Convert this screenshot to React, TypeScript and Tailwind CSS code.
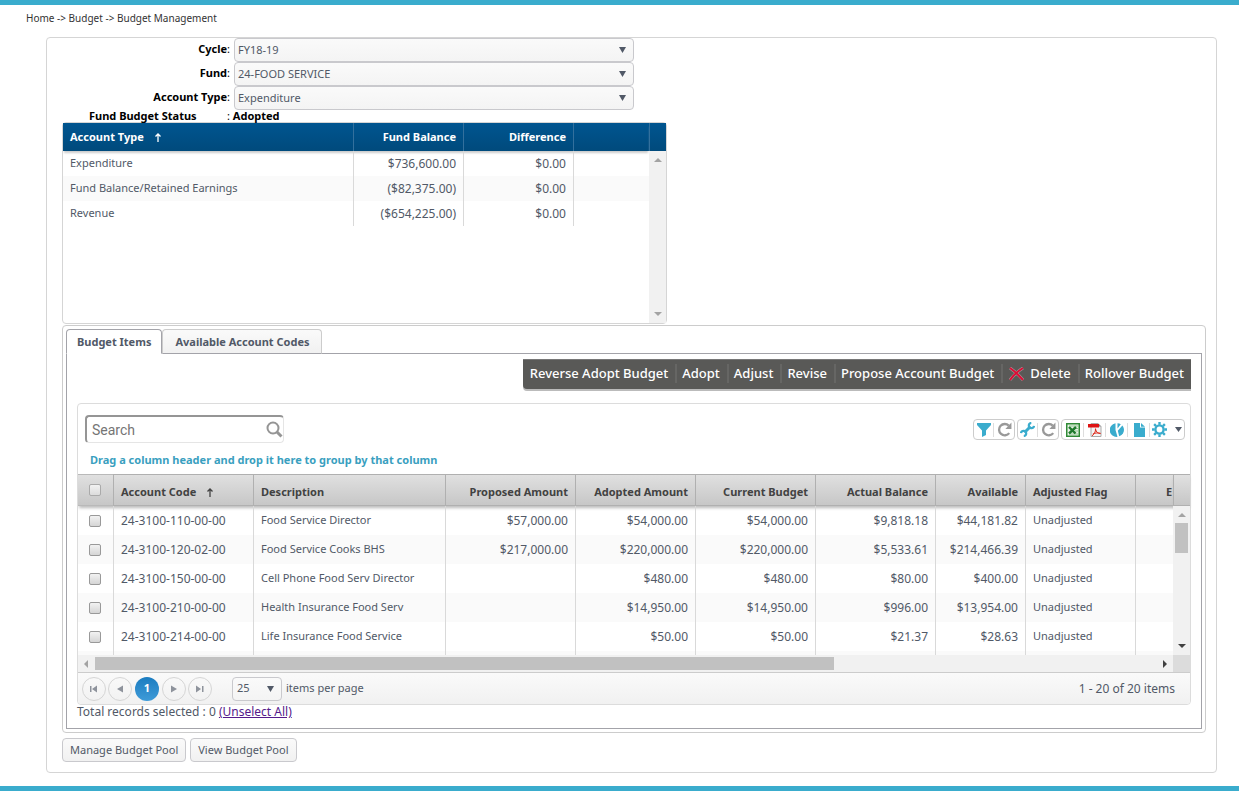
import clsx from "clsx";
import { useState, type ReactNode } from "react";

const accounts = [
  { type: "Expenditure", balance: "$736,600.00", difference: "$0.00" },
  { type: "Fund Balance/Retained Earnings", balance: "($82,375.00)", difference: "$0.00" },
  { type: "Revenue", balance: "($654,225.00)", difference: "$0.00" },
];

const items = [
  ["24-3100-110-00-00", "Food Service Director", "$57,000.00", "$54,000.00", "$54,000.00", "$9,818.18", "$44,181.82", "Unadjusted"],
  ["24-3100-120-02-00", "Food Service Cooks BHS", "$217,000.00", "$220,000.00", "$220,000.00", "$5,533.61", "$214,466.39", "Unadjusted"],
  ["24-3100-150-00-00", "Cell Phone Food Serv Director", "", "$480.00", "$480.00", "$80.00", "$400.00", "Unadjusted"],
  ["24-3100-210-00-00", "Health Insurance Food Serv", "", "$14,950.00", "$14,950.00", "$996.00", "$13,954.00", "Unadjusted"],
  ["24-3100-214-00-00", "Life Insurance Food Service", "", "$50.00", "$50.00", "$21.37", "$28.63", "Unadjusted"],
  ["", "", "", "", "", "", "", ""],
];

const columns = [
  { title: "Account Code", width: "w-[140px]", align: "text-left", size: "text-xs" },
  { title: "Description", width: "w-[192px]", align: "text-left", size: "text-[11px]" },
  { title: "Proposed Amount", width: "w-[130px]", align: "text-right", size: "text-xs" },
  { title: "Adopted Amount", width: "w-[120px]", align: "text-right", size: "text-xs" },
  { title: "Current Budget", width: "w-[120px]", align: "text-right", size: "text-xs" },
  { title: "Actual Balance", width: "w-[120px]", align: "text-right", size: "text-xs" },
  { title: "Available", width: "w-[90px]", align: "text-right", size: "text-xs" },
  { title: "Adjusted Flag", width: "w-[110px]", align: "text-left", size: "text-[11px]" },
];

const actions = ["Reverse Adopt Budget", "Adopt", "Adjust", "Revise", "Propose Account Budget", "Delete", "Rollover Budget"];

function SortArrow() {
  return (
    <svg className="ml-2.5 inline-block" width="8" height="9" viewBox="0 0 8 9" fill="none" stroke="currentColor">
      <path d="M4 9V1M1.5 3.5L4 1L6.5 3.5" strokeWidth="1.3" />
    </svg>
  );
}

function Triangle({ direction = "down", className = "" }: { direction?: "up" | "down" | "left" | "right"; className?: string }) {
  const points = { up: "0,6 4,2 8,6", down: "0,2 8,2 4,6", left: "6,0 6,8 2,4", right: "2,0 2,8 6,4" };
  return (
    <svg className={className} width="8" height="8" viewBox="0 0 8 8" fill="currentColor">
      <polygon points={points[direction]} />
    </svg>
  );
}

function SelectArrow({ className = "" }) {
  return (
    <svg className={clsx("pointer-events-none absolute", className)} width="7" height="6" viewBox="0 0 7 6" fill="#515967">
      <path d="M0 0H7L3.5 6Z" />
    </svg>
  );
}

function Field({ id, label, value }: { id: string; label: string; value: string }) {
  return (
    <div className="flex h-6">
      <label htmlFor={id} className="w-[187px] pr-1 text-right leading-[22px] text-black">
        <b>{label}</b>:
      </label>
      <div className="relative w-[400px]">
        <select
          id={id}
          className="block h-6 w-full appearance-none rounded border border-[#c9c9cd] bg-linear-to-b from-[#fafafa] to-[#f4f4f4] pl-[3px] text-[11px] leading-[22px] text-[#515967]"
        >
          <option>{value}</option>
        </select>
        <SelectArrow className="top-[9px] right-2" />
      </div>
    </div>
  );
}

function AccountGrid() {
  return (
    <div className="flex h-[202px] w-[605px] rounded border border-[#d5d5d5]">
      <div className="flex-1">
        <table className="w-full table-fixed border-separate border-spacing-0">
          <colgroup>
            <col />
            <col className="w-[110px]" />
            <col className="w-[110px]" />
            <col className="w-[76px]" />
          </colgroup>
          <thead className="shadow-[0_3px_2px_-1px_#ccc]">
            <tr className="h-[28px] bg-linear-to-b from-[#005590] to-[#004a7c] text-[11px] text-white">
              <th className="px-[7px] text-left font-bold">
                Account Type
                <SortArrow />
              </th>
              <th className="border-l border-[#33709d] px-[7px] text-right font-bold">Fund Balance</th>
              <th className="border-l border-[#33709d] px-[7px] text-right font-bold">Difference</th>
              <th className="border-l border-[#33709d]"></th>
            </tr>
          </thead>
          <tbody>
            {accounts.map((a) => (
              <tr key={a.type} className="h-[25px] even:bg-[#fafafa]">
                <td className="px-[7px]">{a.type}</td>
                <td className="border-l border-[#d9d9d9] px-[7px] text-right text-xs">{a.balance}</td>
                <td className="border-l border-[#d9d9d9] px-[7px] text-right text-xs">{a.difference}</td>
                <td className="border-l border-[#d9d9d9]"></td>
              </tr>
            ))}
          </tbody>
        </table>
      </div>
      <div className="flex w-[17px] flex-col">
        <div className="h-[28px] border-l border-[#33709d] bg-linear-to-b from-[#005590] to-[#004a7c] shadow-[0_3px_2px_-1px_#ccc]"></div>
        <div className="flex flex-1 flex-col items-center justify-between bg-[#f1f1f1] py-[5px] text-[#a3a3a3]">
          <Triangle direction="up" />
          <Triangle />
        </div>
      </div>
    </div>
  );
}

function ActionBar() {
  return (
    <div className="ml-auto flex h-[30px] w-fit rounded-bl border-t border-[#777] bg-[#595957] py-1 text-[13px] font-medium text-white shadow-[0_2px_0_#bbb]">
      {actions.map((action, i) => (
        <button
          key={action}
          className={clsx(
            "flex h-[19px] items-center pr-[7px] whitespace-nowrap",
            i > 0 ? "border-l-2 border-[#666664] pl-[5px]" : "pl-[7px]",
          )}
        >
          {action === "Delete" && (
            <svg className="mr-1.5 ml-px" width="15" height="14" viewBox="0 0 15 14" fill="none">
              <path d="M1 1Q8 6 14 13M14 1Q6 6 1 13" stroke="#9d9d9d" strokeWidth="3" />
              <path d="M1 1Q8 6 14 13M14 1Q6 6 1 13" stroke="#dc0d35" strokeWidth="2" />
            </svg>
          )}
          {action}
        </button>
      ))}
    </div>
  );
}

function Tool({ label, children }: { label: string; children: ReactNode }) {
  return (
    <button aria-label={label} className="flex h-3.5 w-[22px] items-center justify-center">
      {children}
    </button>
  );
}

function RefreshIcon() {
  return (
    <svg width="15" height="15" viewBox="0 0 14 14" fill="none">
      <path d="M11.4 10.4A5.3 5.3 0 1 1 11 3.4" stroke="#999" strokeWidth="2.2" />
      <path d="M13.5 0.5V6.5H7.8Z" fill="#999" />
    </svg>
  );
}

function Toolbar() {
  return (
    <div className="flex gap-[2px] pr-[5px]">
      <div className="flex h-[21px] w-[42px] items-center divide-x divide-[#ddd] rounded border border-[#ccc]">
        <Tool label="Filter">
          <svg width="14" height="14" viewBox="0 0 14 14" fill="#3aaccd">
            <path d="M0 0H14V2L9 7.5V12L5 14V7.5L0 2Z" />
          </svg>
        </Tool>
        <Tool label="Reset filter">
          <RefreshIcon />
        </Tool>
      </div>
      <div className="flex h-[21px] w-[42px] items-center divide-x divide-[#ddd] rounded border border-[#ccc]">
        <Tool label="Settings">
          <svg width="15" height="15" viewBox="0 0 15 15" fill="none" stroke="#3aaccd">
            <path d="M4.5 10.5L10.5 4.5" strokeWidth="3" />
            <path d="M11.3 1A2.6 2.6 0 1 0 14 3.9" strokeWidth="2.2" />
            <path d="M1 11.2A2.6 2.6 0 1 1 3.8 14" strokeWidth="2.2" />
          </svg>
        </Tool>
        <Tool label="Reset settings">
          <RefreshIcon />
        </Tool>
      </div>
      <div className="flex h-[21px] w-[124px] items-center divide-x divide-[#ddd] rounded border border-[#ccc]">
        <Tool label="Export to Excel">
          <svg width="14" height="14" viewBox="0 0 14 14" fill="none">
            <rect x="0.75" y="0.75" width="12.5" height="12.5" fill="#e9f3e6" stroke="#2f8a35" strokeWidth="1.5" />
            <path d="M3 3H12M9 5.5H12M9 8H12M3 11H12" stroke="#8fc48f" />
            <path d="M3 4L9.5 10.5M10 4L3 10.5" stroke="#1f7a2c" strokeWidth="2.4" />
          </svg>
        </Tool>
        <Tool label="Export to PDF">
          <svg width="14" height="14" viewBox="0 0 14 14" fill="none">
            <path d="M3 0.5H10L13 3.5V13.5H3Z" fill="#f4f4f4" stroke="#aaa" />
            <path d="M10 0.5V3.5H13Z" fill="#777" />
            <rect x="0" y="1" width="11" height="3.5" fill="#dd1313" />
            <path d="M7.5 5.5C8 9 5.5 12 4 12.8M7.5 6C8 9 10 10.5 12.5 10.5M4.8 11C7 10 9 9.6 12.5 10.3" stroke="#dd2a1b" />
          </svg>
        </Tool>
        <Tool label="Chart">
          <svg width="14" height="14" viewBox="0 0 14 14" fill="#3aaccd">
            <path d="M5.5 0.3A6.8 6.8 0 0 0 7.5 13.8L5.5 7Z" />
            <path d="M7.5 0.2A6.7 6.7 0 0 1 10.8 1.3L7.5 5.5Z" />
            <path d="M12.4 2.6A6.7 6.7 0 0 1 9.2 13.3L7.8 7.8Z" />
          </svg>
        </Tool>
        <Tool label="New document">
          <svg className="ml-0.5" width="11" height="14" viewBox="0 0 11 14" fill="#3aaccd">
            <path d="M0 0H6V4.5H11V14H0Z" />
            <path d="M7 0L11 3.7H7Z" />
          </svg>
        </Tool>
        <button aria-label="Options" className="flex h-3.5 flex-1 items-center justify-between px-[2px]">
          <svg width="15" height="15" viewBox="0 0 14 14" fill="none" stroke="#3aaccd">
            <circle cx="7" cy="7" r="3.8" strokeWidth="2.2" />
            <path d="M7 0V2.5M7 11.5V14M0 7H2.5M11.5 7H14M2 2L3.8 3.8M10.2 10.2L12 12M2 12L3.8 10.2M10.2 3.8L12 2" strokeWidth="2.2" />
          </svg>
          <svg width="7" height="5" viewBox="0 0 7 5" fill="#515967">
            <path d="M0 0H7L3.5 5Z" />
          </svg>
        </button>
      </div>
    </div>
  );
}

function ItemsTable() {
  return (
    <div className="flex h-[181px]">
      <div className="min-w-0 flex-1 overflow-hidden">
        <table className="w-[1177px] table-fixed border-separate border-spacing-0">
          <colgroup>
            <col className="w-[35px]" />
            {columns.map((c) => (
              <col key={c.title} className={c.width} />
            ))}
            <col />
          </colgroup>
          <thead className="shadow-[0_3px_3px_-1px_#bbb]">
            <tr className="h-8 bg-linear-to-b from-[#e1e1e1] to-[#c6c6c6] text-[#424242]">
              <th className="border-y border-[#b9b9b9] pr-px">
                <input
                  type="checkbox"
                  aria-label="Select all"
                  className="mx-auto block size-3 appearance-none rounded-xs border border-[#aaa] bg-linear-to-b from-[#f2f2f2] to-[#dcdcdc]"
                />
              </th>
              {columns.map((c) => (
                <th key={c.title} className={clsx("border-y border-l border-[#b0b0b0] px-[7px] pt-1 font-bold whitespace-nowrap", c.align)}>
                  {c.title}
                  {c.title === "Account Code" && <SortArrow />}
                </th>
              ))}
              <th className="border-y border-l border-[#b0b0b0] pt-1 pl-[30px] text-left font-bold">E</th>
            </tr>
          </thead>
          <tbody>
            {items.map((row, i) => (
              <tr key={i} className="h-[29px] even:bg-[#fafafa]">
                <td className="pr-px">
                  {row[0] && (
                    <input
                      type="checkbox"
                      aria-label={`Select ${row[0]}`}
                      className="mx-auto block size-3 appearance-none rounded-xs border border-[#999] bg-linear-to-b from-[#f2f2f2] to-[#d5d5d5]"
                    />
                  )}
                </td>
                {columns.map((c, j) => (
                  <td key={c.title} className={clsx("border-l border-[#d9d9d9] px-[7px] whitespace-nowrap", c.align, c.size)}>
                    {row[j]}
                  </td>
                ))}
                <td className="border-l border-[#d9d9d9]"></td>
              </tr>
            ))}
          </tbody>
        </table>
      </div>
      <div className="flex w-[17px] flex-col">
        <div className="h-8 border-y border-l border-[#b0b0b0] bg-linear-to-b from-[#e1e1e1] to-[#c6c6c6] shadow-[0_3px_3px_-1px_#bbb]"></div>
        <div className="flex flex-1 flex-col items-center bg-[#f1f1f1] py-[5px]">
          <Triangle direction="up" className="text-[#a3a3a3]" />
          <div className="mt-1 h-[30px] w-[13px] bg-[#c1c1c1]"></div>
          <Triangle className="mt-auto text-[#404040]" />
        </div>
      </div>
    </div>
  );
}

function PageButton({ label, children }: { label: string; children: ReactNode }) {
  return (
    <button aria-label={label} className="flex size-6 items-center justify-center rounded-full border border-[#d5d5d5] text-[#8e939c]">
      {children}
    </button>
  );
}

function Pager() {
  return (
    <div className="flex h-8 items-center rounded-b border-t border-[#ccc] bg-linear-to-b from-[#fafafa] to-[#f1f1f1] pr-[15px] pl-1">
      <div className="flex gap-[2px]">
        <PageButton label="First page">
          <svg width="8" height="8" viewBox="0 0 8 8" fill="currentColor">
            <path d="M0 1H1.5V7H0ZM7 0.5V7.5L2 4Z" />
          </svg>
        </PageButton>
        <PageButton label="Previous page">
          <svg width="8" height="8" viewBox="0 0 8 8" fill="currentColor">
            <path d="M7 0.5V7.5L1 4Z" />
          </svg>
        </PageButton>
        <button className="mx-px size-6 rounded-full bg-linear-to-b from-[#1a7cc0] to-[#3e9bd8] font-bold text-white">1</button>
        <PageButton label="Next page">
          <svg width="8" height="8" viewBox="0 0 8 8" fill="currentColor">
            <path d="M1 0.5V7.5L7 4Z" />
          </svg>
        </PageButton>
        <PageButton label="Last page">
          <svg width="8" height="8" viewBox="0 0 8 8" fill="currentColor">
            <path d="M6 1H7.5V7H6ZM0 0.5V7.5L5 4Z" />
          </svg>
        </PageButton>
      </div>
      <label className="ml-5 flex items-center gap-1">
        <span className="relative">
          <select className="block h-6 w-[50px] appearance-none rounded border border-[#c9c9cd] bg-linear-to-b from-[#fafafa] to-[#f4f4f4] pl-1 text-[11px]">
            <option>25</option>
          </select>
          <SelectArrow className="top-[9px] right-2" />
        </span>
        items per page
      </label>
      <span className="ml-auto text-xs">1 - 20 of 20 items</span>
    </div>
  );
}

function ItemsGrid() {
  return (
    <div className="mt-[14px] rounded border border-[#dcdcdc]">
      <div className="flex items-start justify-between pt-[11px] pl-[7px]">
        <div className="relative">
          <input
            aria-label="Search"
            placeholder="Search"
            className="block h-7 w-[199px] rounded border-t-2 border-r border-b border-l-2 border-t-[#959595] border-r-[#e5e5e5] border-b-[#e5e5e5] border-l-[#959595] pl-[5px] font-[Roboto,sans-serif] text-sm placeholder:text-[#757575]"
          />
          <svg className="absolute top-1.5 right-px" width="17" height="17" viewBox="0 0 17 17" fill="none" stroke="#959595">
            <circle cx="7" cy="7" r="5.5" strokeWidth="2" />
            <path d="M11 11L15.5 15.5" strokeWidth="3" />
          </svg>
        </div>
        <div className="mt-1">
          <Toolbar />
        </div>
      </div>
      <p className="px-3 pt-2 pb-[5px] text-[11px] leading-[18px] font-bold text-[#3a9fbf]">Drag a column header and drop it here to group by that column</p>
      <ItemsTable />
      <div className="flex h-[17px] items-center bg-[#f1f1f1]">
        <div className="flex flex-1 items-center px-1">
          <Triangle direction="left" className="text-[#a3a3a3]" />
          <div className="ml-[5px] h-[13px] w-[68%] bg-[#c1c1c1]"></div>
          <Triangle direction="right" className="ml-auto text-[#404040]" />
        </div>
        <div className="h-[17px] w-[17px] bg-[#dcdcdc]"></div>
      </div>
      <Pager />
    </div>
  );
}

export default function App() {
  const [tab, setTab] = useState("Budget Items");

  return (
    <div className="border-y-[5px] border-[#3aaccd] bg-white pb-[13px] font-['Noto_Sans',sans-serif] text-[11px] text-[#515967]">
      <nav className="pt-[5px] pl-[26px] text-[10px] leading-4 text-[#333]">Home -&gt; Budget -&gt; Budget Management</nav>
      <main className="mt-[11px] mr-[22px] ml-[46px] rounded border border-[#d5d5d5] pr-[10px] pb-[10px] pl-[15px]">
        <div className="-ml-[15px]">
          <Field id="cycle" label="Cycle" value="FY18-19" />
          <Field id="fund" label="Fund" value="24-FOOD SERVICE" />
          <Field id="type" label="Account Type" value="Expenditure" />
        </div>
        <div className="flex h-3 pl-[27px] leading-3 text-black">
          <b className="w-[138px]">Fund Budget Status</b>
          <span>
            : <b>Adopted</b>
          </span>
        </div>
        <AccountGrid />
        <section className="mt-px rounded border border-[#ccc] p-[3px]">
          <div role="tablist" className="relative -mb-px flex h-[25px] font-bold">
            {["Budget Items", "Available Account Codes"].map((t) => (
              <button
                key={t}
                role="tab"
                aria-selected={tab === t}
                onClick={() => setTab(t)}
                className={clsx(
                  "rounded-t border pt-px",
                  tab === t
                    ? "border-[#a3a3a9] border-b-white bg-white px-[10px]"
                    : "border-[#ccc] border-b-[#a3a3a9] bg-linear-to-b from-[#fafafa] to-[#f1f1f1] px-3",
                )}
              >
                {t}
              </button>
            ))}
          </div>
          <div className="border border-[#a3a3a9] px-[10px] pt-[5px] pb-[10px]">
            <ActionBar />
            <ItemsGrid />
            <p className="text-xs leading-[13px]">
              Total records selected : 0{" "}
              <a href="#" className="text-[#551a8b] underline">
                (Unselect All)
              </a>
            </p>
          </div>
        </section>
        <div className="mt-[5px] flex gap-1">
          {["Manage Budget Pool", "View Budget Pool"].map((label) => (
            <button key={label} className="h-6 rounded border border-[#c9c9cd] bg-linear-to-b from-[#fafafa] to-[#f1f1f1] px-[7px]">
              {label}
            </button>
          ))}
        </div>
      </main>
    </div>
  );
}
